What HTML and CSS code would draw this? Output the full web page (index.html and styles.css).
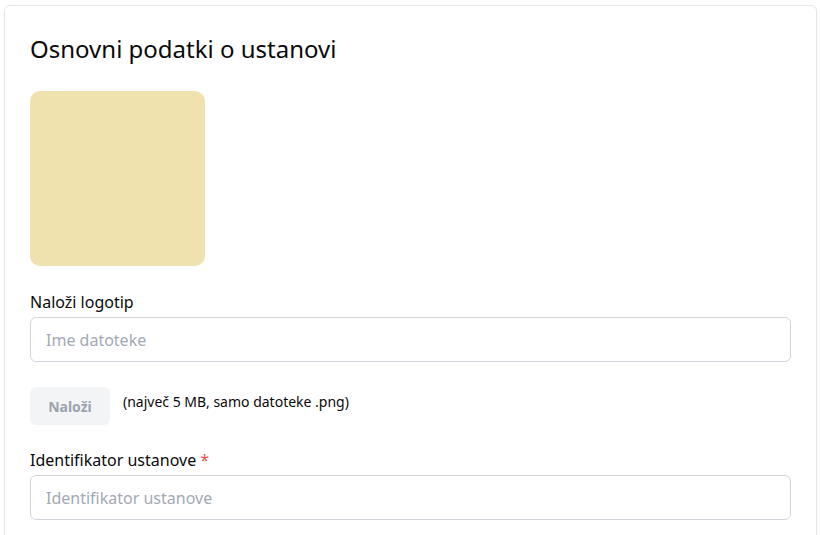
FILE: index.html
```html
<!DOCTYPE html>
<html lang="sl">
<head>
<meta charset="utf-8">
<link rel="stylesheet" href="styles.css">
</head>
<body>
<div class="card">
  <h2 class="title">Osnovni podatki o ustanovi</h2>
  <div class="logo"></div>
  <div class="field">
    <label class="label">Naloži logotip</label>
    <input class="input" type="text" placeholder="Ime datoteke">
  </div>
  <div class="upload-row">
    <button class="btn" disabled>Naloži</button>
    <span class="hint">(največ 5 MB, samo datoteke .png)</span>
  </div>
  <div class="field">
    <label class="label">Identifikator ustanove <span class="req">*</span></label>
    <input class="input" type="text" placeholder="Identifikator ustanove">
  </div>
</div>
</body>
</html>
```
FILE: styles.css
```css
* { box-sizing: border-box; }
html, body { margin: 0; background: #fff; }
body {
  padding: 5px 3px 0 4px;
  font-family: "Noto Sans", "Open Sans", sans-serif;
  color: #0a0a0a;
  height: 535px;
  overflow: hidden;
}
.card {
  border: 1px solid #e5e7eb;
  border-radius: 6px;
  box-shadow: 0 1px 3px rgba(0,0,0,0.06);
  padding: 25px 25px 40px 25px;
  min-height: 600px;
}
.title {
  margin: 0;
  font-size: 24px;
  font-weight: 400;
  line-height: 36px;
}
.logo {
  margin-top: 24px;
  width: 175px;
  height: 175px;
  border-radius: 10px;
  background: #efe2ae;
}
.field { display: flex; flex-direction: column; }
.logo + .field { margin-top: 24px; }
.label {
  font-size: 16px;
  line-height: 24px;
  margin-bottom: 3px;
}
.req { color: #f05252; }
.input {
  height: 45px;
  border: 1px solid #d1d5db;
  border-radius: 6px;
  padding: 0 15px;
  font-family: inherit;
  font-size: 16px;
  color: #111;
  background: #fff;
  outline: none;
}
.input::placeholder { color: #a3a9b3; }
.upload-row {
  display: flex;
  align-items: flex-start;
  gap: 13px;
  margin-top: 25px;
  margin-bottom: 23px;
}
.btn {
  width: 80px;
  height: 38px;
  border: none;
  border-radius: 6px;
  background: #f3f4f6;
  color: #9ca3af;
  font-family: inherit;
  font-weight: 700;
  font-size: 14px;
}
.hint {
  font-size: 14px;
  line-height: 20px;
  padding-top: 5px;
}
```
